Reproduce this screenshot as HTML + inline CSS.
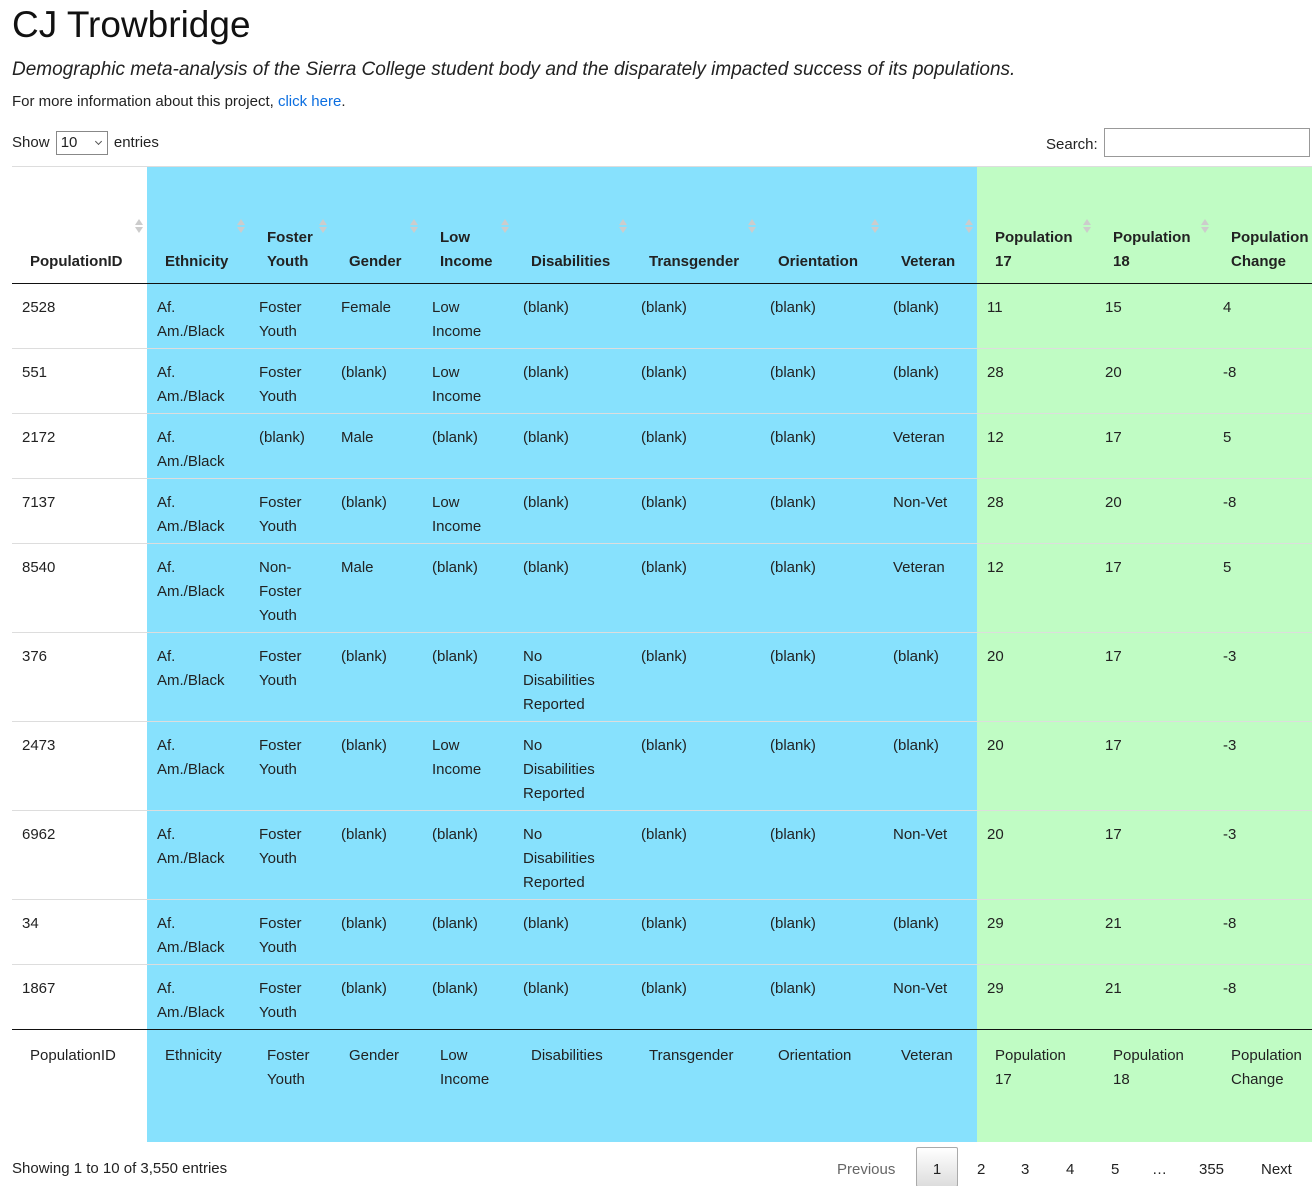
<!DOCTYPE html>
<html><head><meta charset="utf-8"><style>
html,body{margin:0;padding:0;width:1312px;height:1186px;overflow:hidden;background:#fff;}
body{font-family:"Liberation Sans","DejaVu Sans",sans-serif;color:#222;font-size:15px;position:relative;}
h1{position:absolute;left:12px;top:4px;margin:0;font-weight:normal;font-size:37px;color:#111;}
.sub{position:absolute;left:12px;top:59px;font-style:italic;font-size:19px;color:#222;}
.info{position:absolute;left:12px;top:93px;font-size:15px;}
.info a{color:#0b6ee0;text-decoration:none}
.show{position:absolute;left:12px;top:131px;font-size:15px;}
.sel{display:inline-block;width:52px;height:24px;border:1px solid #888;vertical-align:middle;box-sizing:border-box;padding:0 4px;line-height:22px;position:relative;margin:0 2px}
.sel:after{content:"";position:absolute;right:6px;top:7px;width:4px;height:4px;border-right:1px solid #555;border-bottom:1px solid #555;transform:rotate(45deg)}
.search{position:absolute;left:1046px;top:136px;font-size:15px;}
.search span{position:absolute;left:58px;top:-8px;width:206px;height:29px;border:1px solid #999;box-sizing:border-box}
table{position:absolute;left:12px;top:166px;border-collapse:collapse;table-layout:fixed;width:1320px;border-top:1px solid #ddd}
td,th{padding:12px 10px 4px;line-height:24px;vertical-align:top;text-align:left;border-bottom:1px solid #ddd}
th{font-weight:bold;vertical-align:bottom;height:97px;border-bottom:1px solid #111;padding-bottom:9px;padding-top:10px;position:relative}
th:after{content:"";position:absolute;right:4px;top:52px;width:0;height:0;border-left:4px solid transparent;border-right:4px solid transparent;border-bottom:6px solid #ccc}
th:before{content:"";position:absolute;right:4px;top:60px;width:0;height:0;border-left:4px solid transparent;border-right:4px solid transparent;border-top:6px solid #ccc}
th:first-child{padding-left:18px}
tfoot td{border-top:1px solid #111;border-bottom:none;height:94px;padding-top:14px;padding-bottom:4px}
tfoot td:first-child{padding-left:18px}
.b{background:#87e1fd}.g{background:#c0fcc4}
tbody tr:last-child td{border-bottom:none}
.foot{position:absolute;left:12px;top:1160px;font-size:15px;}
.pg{position:absolute;top:1147px;left:820px;font-size:15px;height:40px}
.pg span{position:absolute;top:14px}
.pg .cur{left:96px;top:0;width:42px;height:40px;border:1px solid #aaa;border-radius:2px;background:linear-gradient(#fff,#ddd);box-sizing:border-box;text-align:center;line-height:44px}
</style></head><body>
<h1>CJ Trowbridge</h1>
<div class="sub">Demographic meta-analysis of the Sierra College student body and the disparately impacted success of its populations.</div>
<div class="info">For more information about this project, <a>click here</a>.</div>
<div class="show">Show <span class="sel">10</span> entries</div>
<div class="search">Search:<span></span></div>
<table>
<colgroup><col style="width:135px"><col style="width:102px"><col style="width:82px"><col style="width:91px"><col style="width:91px"><col style="width:118px"><col style="width:129px"><col style="width:123px"><col style="width:94px"><col style="width:118px"><col style="width:118px"><col style="width:119px"></colgroup>
<thead><tr><th>PopulationID</th><th class="b" style="padding-left:18px">Ethnicity</th><th class="b" style="padding-left:18px">Foster<br>Youth</th><th class="b" style="padding-left:18px">Gender</th><th class="b" style="padding-left:18px">Low<br>Income</th><th class="b" style="padding-left:18px">Disabilities</th><th class="b" style="padding-left:18px">Transgender</th><th class="b" style="padding-left:18px">Orientation</th><th class="b" style="padding-left:18px">Veteran</th><th class="g" style="padding-left:18px">Population<br>17</th><th class="g" style="padding-left:18px">Population<br>18</th><th class="g" style="padding-left:18px">Population<br>Change</th></tr></thead>
<tbody>
<tr><td>2528</td><td class="b">Af.<br>Am./Black</td><td class="b">Foster<br>Youth</td><td class="b">Female</td><td class="b">Low<br>Income</td><td class="b">(blank)</td><td class="b">(blank)</td><td class="b">(blank)</td><td class="b">(blank)</td><td class="g">11</td><td class="g">15</td><td class="g">4</td></tr>
<tr><td>551</td><td class="b">Af.<br>Am./Black</td><td class="b">Foster<br>Youth</td><td class="b">(blank)</td><td class="b">Low<br>Income</td><td class="b">(blank)</td><td class="b">(blank)</td><td class="b">(blank)</td><td class="b">(blank)</td><td class="g">28</td><td class="g">20</td><td class="g">-8</td></tr>
<tr><td>2172</td><td class="b">Af.<br>Am./Black</td><td class="b">(blank)</td><td class="b">Male</td><td class="b">(blank)</td><td class="b">(blank)</td><td class="b">(blank)</td><td class="b">(blank)</td><td class="b">Veteran</td><td class="g">12</td><td class="g">17</td><td class="g">5</td></tr>
<tr><td>7137</td><td class="b">Af.<br>Am./Black</td><td class="b">Foster<br>Youth</td><td class="b">(blank)</td><td class="b">Low<br>Income</td><td class="b">(blank)</td><td class="b">(blank)</td><td class="b">(blank)</td><td class="b">Non-Vet</td><td class="g">28</td><td class="g">20</td><td class="g">-8</td></tr>
<tr><td>8540</td><td class="b">Af.<br>Am./Black</td><td class="b">Non-<br>Foster<br>Youth</td><td class="b">Male</td><td class="b">(blank)</td><td class="b">(blank)</td><td class="b">(blank)</td><td class="b">(blank)</td><td class="b">Veteran</td><td class="g">12</td><td class="g">17</td><td class="g">5</td></tr>
<tr><td>376</td><td class="b">Af.<br>Am./Black</td><td class="b">Foster<br>Youth</td><td class="b">(blank)</td><td class="b">(blank)</td><td class="b">No<br>Disabilities<br>Reported</td><td class="b">(blank)</td><td class="b">(blank)</td><td class="b">(blank)</td><td class="g">20</td><td class="g">17</td><td class="g">-3</td></tr>
<tr><td>2473</td><td class="b">Af.<br>Am./Black</td><td class="b">Foster<br>Youth</td><td class="b">(blank)</td><td class="b">Low<br>Income</td><td class="b">No<br>Disabilities<br>Reported</td><td class="b">(blank)</td><td class="b">(blank)</td><td class="b">(blank)</td><td class="g">20</td><td class="g">17</td><td class="g">-3</td></tr>
<tr><td>6962</td><td class="b">Af.<br>Am./Black</td><td class="b">Foster<br>Youth</td><td class="b">(blank)</td><td class="b">(blank)</td><td class="b">No<br>Disabilities<br>Reported</td><td class="b">(blank)</td><td class="b">(blank)</td><td class="b">Non-Vet</td><td class="g">20</td><td class="g">17</td><td class="g">-3</td></tr>
<tr><td>34</td><td class="b">Af.<br>Am./Black</td><td class="b">Foster<br>Youth</td><td class="b">(blank)</td><td class="b">(blank)</td><td class="b">(blank)</td><td class="b">(blank)</td><td class="b">(blank)</td><td class="b">(blank)</td><td class="g">29</td><td class="g">21</td><td class="g">-8</td></tr>
<tr><td>1867</td><td class="b">Af.<br>Am./Black</td><td class="b">Foster<br>Youth</td><td class="b">(blank)</td><td class="b">(blank)</td><td class="b">(blank)</td><td class="b">(blank)</td><td class="b">(blank)</td><td class="b">Non-Vet</td><td class="g">29</td><td class="g">21</td><td class="g">-8</td></tr>
</tbody>
<tfoot><tr><td>PopulationID</td><td class="b" style="padding-left:18px">Ethnicity</td><td class="b" style="padding-left:18px">Foster<br>Youth</td><td class="b" style="padding-left:18px">Gender</td><td class="b" style="padding-left:18px">Low<br>Income</td><td class="b" style="padding-left:18px">Disabilities</td><td class="b" style="padding-left:18px">Transgender</td><td class="b" style="padding-left:18px">Orientation</td><td class="b" style="padding-left:18px">Veteran</td><td class="g" style="padding-left:18px">Population<br>17</td><td class="g" style="padding-left:18px">Population<br>18</td><td class="g" style="padding-left:18px">Population<br>Change</td></tr></tfoot>
</table>
<div class="foot">Showing 1 to 10 of 3,550 entries</div>
<div class="pg"><span style="left:17px;color:#666">Previous</span><span class="cur">1</span><span style="left:157px">2</span><span style="left:201px">3</span><span style="left:246px">4</span><span style="left:291px">5</span><span style="left:332px">…</span><span style="left:379px">355</span><span style="left:441px">Next</span></div>
</body></html>
